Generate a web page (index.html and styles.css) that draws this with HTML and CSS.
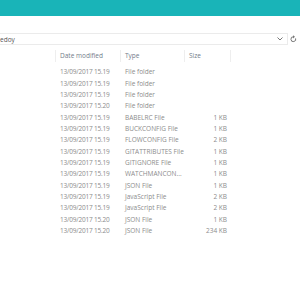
FILE: index.html
```html
<!DOCTYPE html>
<html lang="en">
<head>
    <meta charset="UTF-8">
    <title>Explorer</title>
    <link rel="stylesheet" href="styles.css">
</head>
<body>
    <div class="titlebar"></div>

    <div class="addressrow">
        <div class="address">
            <span class="path">edoy</span>
            <svg class="chev" width="6" height="4" viewBox="0 0 6 4"><path d="M0.5 0.5 L3 3 L5.5 0.5" fill="none" stroke="#777" stroke-width="1"/></svg>
        </div>
        <svg class="refresh" width="7" height="8" viewBox="0 0 7 8"><path d="M5.6 3.4 A2.4 2.4 0 1 1 3.5 1.8" fill="none" stroke="#777" stroke-width="1"/><path d="M3 0.2 L5 1.8 L3 3.4 Z" fill="#777"/></svg>
    </div>

    <div class="list">
        <div class="header">
            <div class="cell name"></div>
            <div class="cell date">Date modified</div>
            <div class="cell type">Type</div>
            <div class="cell size">Size</div>
        </div>
        <div id="rows"></div>
    </div>

    <script>
        const files = [
            ['13/09/2017 15.19', 'File folder', ''],
            ['13/09/2017 15.19', 'File folder', ''],
            ['13/09/2017 15.19', 'File folder', ''],
            ['13/09/2017 15.20', 'File folder', ''],
            ['13/09/2017 15.19', 'BABELRC File', '1 KB'],
            ['13/09/2017 15.19', 'BUCKCONFIG File', '1 KB'],
            ['13/09/2017 15.19', 'FLOWCONFIG File', '2 KB'],
            ['13/09/2017 15.19', 'GITATTRIBUTES File', '1 KB'],
            ['13/09/2017 15.19', 'GITIGNORE File', '1 KB'],
            ['13/09/2017 15.19', 'WATCHMANCON...', '1 KB'],
            ['13/09/2017 15.19', 'JSON File', '1 KB'],
            ['13/09/2017 15.19', 'JavaScript File', '2 KB'],
            ['13/09/2017 15.19', 'JavaScript File', '2 KB'],
            ['13/09/2017 15.20', 'JSON File', '1 KB'],
            ['13/09/2017 15.20', 'JSON File', '234 KB']
        ];

        const rows = document.getElementById('rows');
        files.forEach(f => {
            const row = document.createElement('div');
            row.className = 'row';
            row.innerHTML = `<div class="cell name"></div><div class="cell date">${f[0]}</div><div class="cell type">${f[1]}</div><div class="cell size">${f[2]}</div>`;
            rows.appendChild(row);
        });
    </script>
</body>
</html>
```

FILE: styles.css
```css
body {
    margin: 0;
    background: #fff;
    font-family: "Open Sans", "Noto Sans", sans-serif;
    font-size: 6.5px;
    color: #8c8c8c;
    width: 300px;
    height: 300px;
    overflow: hidden;
}
.titlebar {
    height: 16px;
    background-color: #19b4b8;
}
.addressrow {
    display: flex;
    align-items: center;
    margin-top: 17px;
    height: 12px;
}
.address {
    box-sizing: border-box;
    width: 288px;
    height: 12px;
    border: 1px solid #ebebeb;
    border-left: none;
    display: flex;
    align-items: center;
    justify-content: space-between;
    padding-right: 4px;
}
.path {
    color: #555;
}
.refresh {
    margin-left: 2px;
}
.list {
    margin-top: 5px;
}
.header, .row {
    display: grid;
    grid-template-columns: 56px 65px 64px 46px;
    align-items: center;
}
.header {
    height: 12px;
    color: #737d8a;
}
.header .cell {
    height: 12px;
    line-height: 12px;
    border-right: 1px solid #eeeeee;
}
.header .size {
    text-align: left;
    padding-left: 4px;
}
#rows {
    margin-top: 4.3px;
}
.row {
    height: 11.33px;
    line-height: 11.33px;
}
.row .date {
    letter-spacing: -0.2px;
}
.cell {
    box-sizing: border-box;
    padding-left: 4px;
    white-space: nowrap;
    overflow: hidden;
}
.size {
    text-align: right;
    padding-right: 4px;
}
```
